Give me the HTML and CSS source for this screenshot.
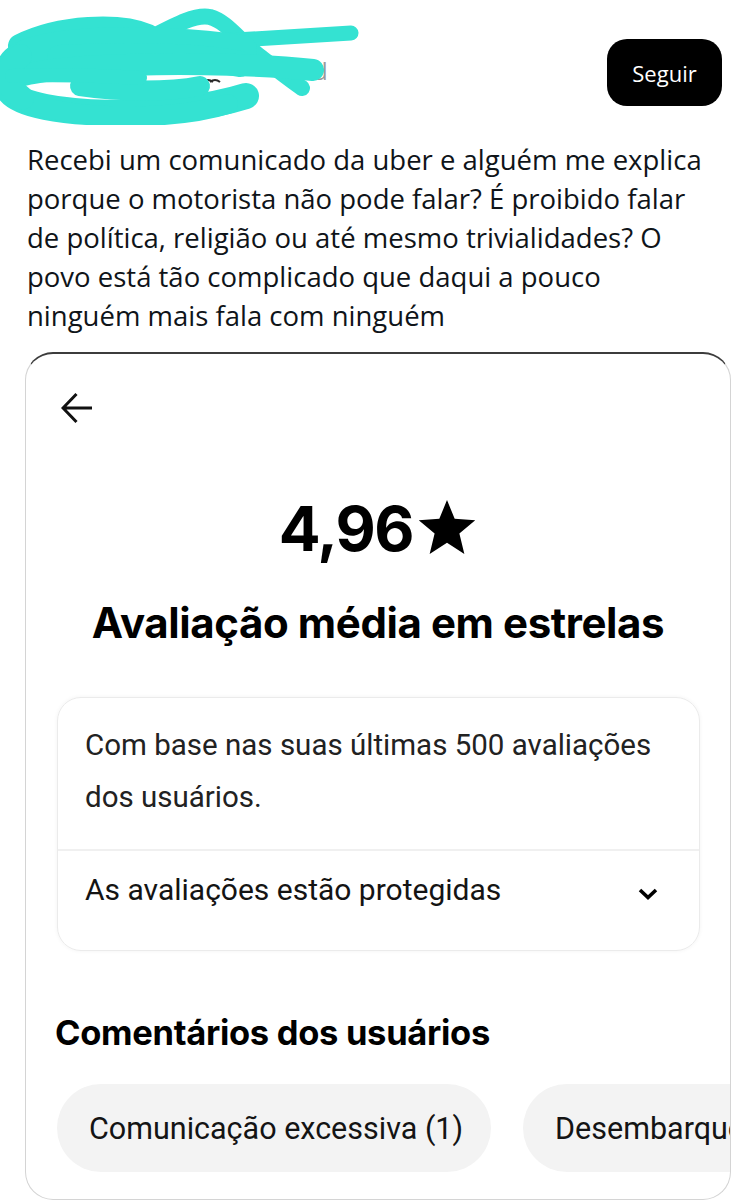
FILE: index.html
```html
<!DOCTYPE html>
<html lang="pt-BR">
<head>
<meta charset="utf-8">
<title>Post</title>
<link rel="stylesheet" href="styles.css">
</head>
<body>
<div class="page">
  <header class="header">
    <svg class="scribble" width="360" height="125" viewBox="0 0 360 125" aria-hidden="true">
      <text x="313" y="80" class="hidden-name">d</text>
      <path d="M33 53 q4 -7 12 -8" class="avatar-edge"/>
      <path d="M72 78 q12 -3 24 0" class="avatar-edge"/>
      <path d="M52 113 q8 5 18 5" class="avatar-dark"/>
      <path d="M203 82 q5 -4 10 0 M210 82 q5 -4 10 0" class="avatar-dark"/>
      <g class="ink">
        <path d="M20 46 C60 26 120 24 148 36" stroke-width="24"/>
        <path d="M150 38 C175 25 195 14 210 17 C228 22 240 42 262 58 C280 72 296 84 302 88" stroke-width="16"/>
        <path d="M170 44 C240 40 300 36 351 33" stroke-width="15"/>
        <path d="M12 66 C20 40 150 36 242 50" stroke-width="30"/>
        <path d="M60 58 C130 54 200 56 240 64" stroke-width="26"/>
        <path d="M6 82 C30 62 220 60 313 70" stroke-width="22"/>
        <path d="M10 92 C32 118 170 120 246 96" stroke-width="26"/>
        <path d="M40 106 C90 121 180 119 228 104" stroke-width="20"/>
        <path d="M20 56 C4 70 4 84 22 98" stroke-width="24"/>
        <path d="M80 86 C120 92 170 92 200 86" stroke-width="20"/>
        <path d="M12 76 C60 74 100 76 140 78" stroke-width="14"/>
      </g>
    </svg>
    <button class="follow">Seguir</button>
  </header>

  <p class="post-text">Recebi um comunicado da uber e alguém me explica<br>porque o motorista não pode falar? É proibido falar<br>de política, religião ou até mesmo trivialidades? O<br>povo está tão complicado que daqui a pouco<br>ninguém mais fala com ninguém</p>

  <section class="card">
    <svg class="back" width="32" height="34" viewBox="0 0 32 34" aria-hidden="true">
      <path d="M31 17 H3 M15.5 3 L2 17 L15.5 31" />
    </svg>

    <div class="rating">
      <span class="rating-value">4,96</span>
      <svg class="star" width="60" height="57" viewBox="0 0 24 23" aria-hidden="true">
        <polygon points="12,0 15.1,7.6 23.4,8.2 17,13.5 19,21.8 12,17.3 5,21.8 7,13.5 0.6,8.2 8.9,7.6"/>
      </svg>
    </div>

    <h1 class="title">Avaliação média em estrelas</h1>

    <div class="info-box">
      <p class="info-text">Com base nas suas últimas 500 avaliações<br>dos usuários.</p>
      <div class="info-row">
        <span class="info-row-label">As avaliações estão protegidas</span>
        <svg class="chevron" width="20" height="12" viewBox="0 0 20 12" aria-hidden="true">
          <path d="M2 2 L10 9.5 L18 2"/>
        </svg>
      </div>
    </div>

    <h2 class="subtitle">Comentários dos usuários</h2>

    <div class="chips">
      <span class="chip">Comunicação excessiva (1)</span>
      <span class="chip">Desembarque no local errado (1)</span>
    </div>
  </section>
</div>
</body>
</html>
```

FILE: styles.css
```css
* {
  box-sizing: border-box;
}

html, body {
  margin: 0;
  padding: 0;
  background: #ffffff;
}

body {
  width: 755px;
  height: 1200px;
  overflow: hidden;
  font-family: "Open Sans", "Noto Sans", sans-serif;
  color: #0f1419;
}

.page {
  width: 755px;
}

.header {
  display: flex;
  justify-content: space-between;
  align-items: flex-start;
  height: 140px;
}

.scribble {
  display: block;
}

.scribble .ink path {
  fill: none;
  stroke: #34e2d2;
  stroke-linecap: round;
  stroke-linejoin: round;
}

.hidden-name {
  font-family: "Open Sans", sans-serif;
  font-size: 24px;
  fill: #9a9a9a;
}

.avatar-edge {
  fill: none;
  stroke: #c8864c;
  stroke-width: 3;
}

.avatar-dark {
  fill: none;
  stroke: #2a2a2a;
  stroke-width: 2;
}

.follow {
  margin: 39px 33px 0 0;
  width: 115px;
  height: 67px;
  border: none;
  border-radius: 20px;
  background: #000000;
  color: #ffffff;
  font-family: "Open Sans", sans-serif;
  font-size: 22px;
  padding: 0;
}

.post-text {
  margin: 0;
  padding: 0 20px 0 27px;
  font-size: 27.5px;
  line-height: 39px;
  color: #0f1419;
  white-space: nowrap;
}

.card {
  margin: 17px 24px 0 25px;
  height: 848px;
  border: 1px solid #d4d4d4;
  border-top: 2px solid #3c3c3c;
  border-radius: 28px;
  overflow: hidden;
  padding: 37px 0 0 0;
  font-family: Roboto, "Noto Sans", sans-serif;
  color: #141414;
}

.back {
  display: block;
  margin-left: 35px;
}

.back path {
  fill: none;
  stroke: #111111;
  stroke-width: 3;
  stroke-linecap: butt;
  stroke-linejoin: miter;
}

.rating {
  display: flex;
  justify-content: center;
  align-items: flex-start;
  gap: 4px;
  margin-top: 73px;
}

.rating-value {
  font-family: Inter, "Noto Sans", sans-serif;
  font-weight: 700;
  font-size: 62px;
  line-height: 62px;
  letter-spacing: -1.5px;
  color: #000000;
}

.star {
  display: block;
  margin-top: 2px;
  fill: #000000;
}

.title {
  margin: 38px 0 0 0;
  text-align: center;
  font-family: Inter, "Noto Sans", sans-serif;
  font-weight: 700;
  font-size: 42px;
  line-height: 50px;
  letter-spacing: -0.4px;
  color: #000000;
}

.info-box {
  margin: 49px 30px 0 31px;
  border: 1px solid #ebebeb;
  border-radius: 24px;
  box-shadow: 0 0 4px rgba(0, 0, 0, 0.05);
}

.info-text {
  margin: 0;
  padding: 21px 28px 26px 27px;
  font-size: 29.5px;
  line-height: 52px;
  color: #222222;
  border-bottom: 2px solid #f0f0f0;
}

.info-row {
  display: flex;
  justify-content: space-between;
  align-items: center;
  padding: 13px 41px 34px 27px;
}

.info-row-label {
  font-size: 30px;
  line-height: 52px;
  color: #141414;
}

.chevron {
  display: block;
  margin-top: 7px;
}

.chevron path {
  fill: none;
  stroke: #000000;
  stroke-width: 3.6;
}

.subtitle {
  margin: 61px 0 0 29px;
  font-family: Inter, "Noto Sans", sans-serif;
  font-weight: 700;
  font-size: 34.5px;
  line-height: 42px;
  letter-spacing: -0.3px;
  color: #000000;
}

.chips {
  display: flex;
  gap: 32px;
  margin: 30px 0 0 31px;
  white-space: nowrap;
}

.chip {
  flex: none;
  display: flex;
  align-items: center;
  height: 88px;
  padding: 0 28px 0 32px;
  border-radius: 44px;
  background: #f3f3f3;
  font-size: 30.5px;
  color: #141414;
}
```
